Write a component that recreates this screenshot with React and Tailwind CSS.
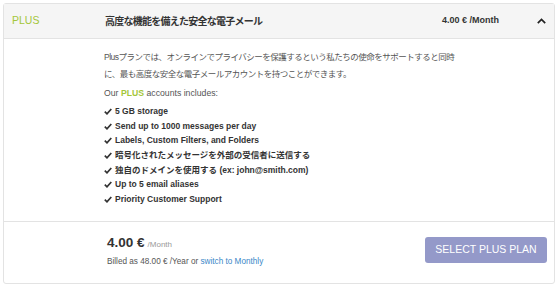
import React from "react";

const features = [
  { text: "5 GB storage" },
  { text: "Send up to 1000 messages per day" },
  { text: "Labels, Custom Filters, and Folders" },
  { jp: "暗号化されたメッセージを外部の受信者に送信する" },
  { jp: "独自のドメインを使用する", text: " (ex: john@smith.com)" },
  { text: "Up to 5 email aliases" },
  { text: "Priority Customer Support" },
];

const Check = () => (
  <svg width="8" height="7" viewBox="0 0 8 7" className="shrink-0">
    <path d="M0.8 3.6 L3 5.8 L7.3 1" fill="none" stroke="#333" strokeWidth="1.7" />
  </svg>
);

const App = () => {
  return (
    <div
      className="w-[560px] h-[288px] bg-white pt-[3px] px-[3px]"
      style={{ fontFamily: '"Liberation Sans", Arial, "Noto Sans CJK JP", sans-serif' }}
    >
      <div className="w-[552px] h-[281px] border border-[#e3e3e3] rounded-[3px] flex flex-col">
        {/* Header */}
        <div className="h-[35px] shrink-0 bg-[#f5f5f5] border-b border-[#e3e3e3] flex items-center">
          <div className="w-[101px] pl-[8px] text-[10.5px] text-[#a4c639]">PLUS</div>
          <div className="flex-1 text-[10px] tracking-[-0.75px] font-bold text-[#333]">
            高度な機能を備えた安全な電子メール
          </div>
          <div className="text-[9px] font-bold text-[#333] mr-[38px]">4.00 € /Month</div>
          <svg width="9" height="6" viewBox="0 0 9 6" className="mr-[8px]">
            <path d="M0.8 5.2 L4.5 1.5 L8.2 5.2" fill="none" stroke="#222" strokeWidth="1.7" />
          </svg>
        </div>

        {/* Body */}
        <div className="flex-1 pl-[100px] pt-[10px] text-[#555]">
          <p className="text-[8.5px] leading-[17px] w-[356px] tracking-[-0.5px]">
            Plusプランでは、オンラインでプライバシーを保護するという私たちの使命をサポートすると同時に、最も高度な安全な電子メールアカウントを持つことができます。
          </p>
          <p className="text-[8.7px] leading-[12px] mt-[4px]">
            Our <span className="text-[#a4c639] font-bold">PLUS</span> accounts includes:
          </p>
          <ul className="mt-[5px] flex flex-col">
            {features.map((f, i) => (
              <li
                key={i}
                className="flex items-center gap-[3px] h-[14.7px] text-[8.5px] font-bold text-[#333]"
              >
                <Check />
                <span>
                  {f.jp}
                  {f.text}
                </span>
              </li>
            ))}
          </ul>
        </div>

        {/* Footer */}
        <div className="h-[62px] shrink-0 border-t border-[#e3e3e3] flex items-start pl-[103px] pr-[7px]">
          <div className="flex-1 pt-[13px]">
            <div className="flex items-baseline gap-[3px] leading-[16px]">
              <span className="text-[13.5px] font-bold text-[#333]">4.00 €</span>
              <span className="text-[8px] text-[#999]">/Month</span>
            </div>
            <div className="text-[8.2px] leading-[11px] text-[#555] mt-[3px]">
              Billed as 48.00 € /Year or <span className="text-[#3a87c8]">switch to Monthly</span>
            </div>
          </div>
          <button className="mt-[15px] w-[122px] h-[26px] bg-[#9499c9] rounded-[3px] text-white text-[10.5px]">
            SELECT PLUS PLAN
          </button>
        </div>
      </div>
    </div>
  );
};

export default App;
